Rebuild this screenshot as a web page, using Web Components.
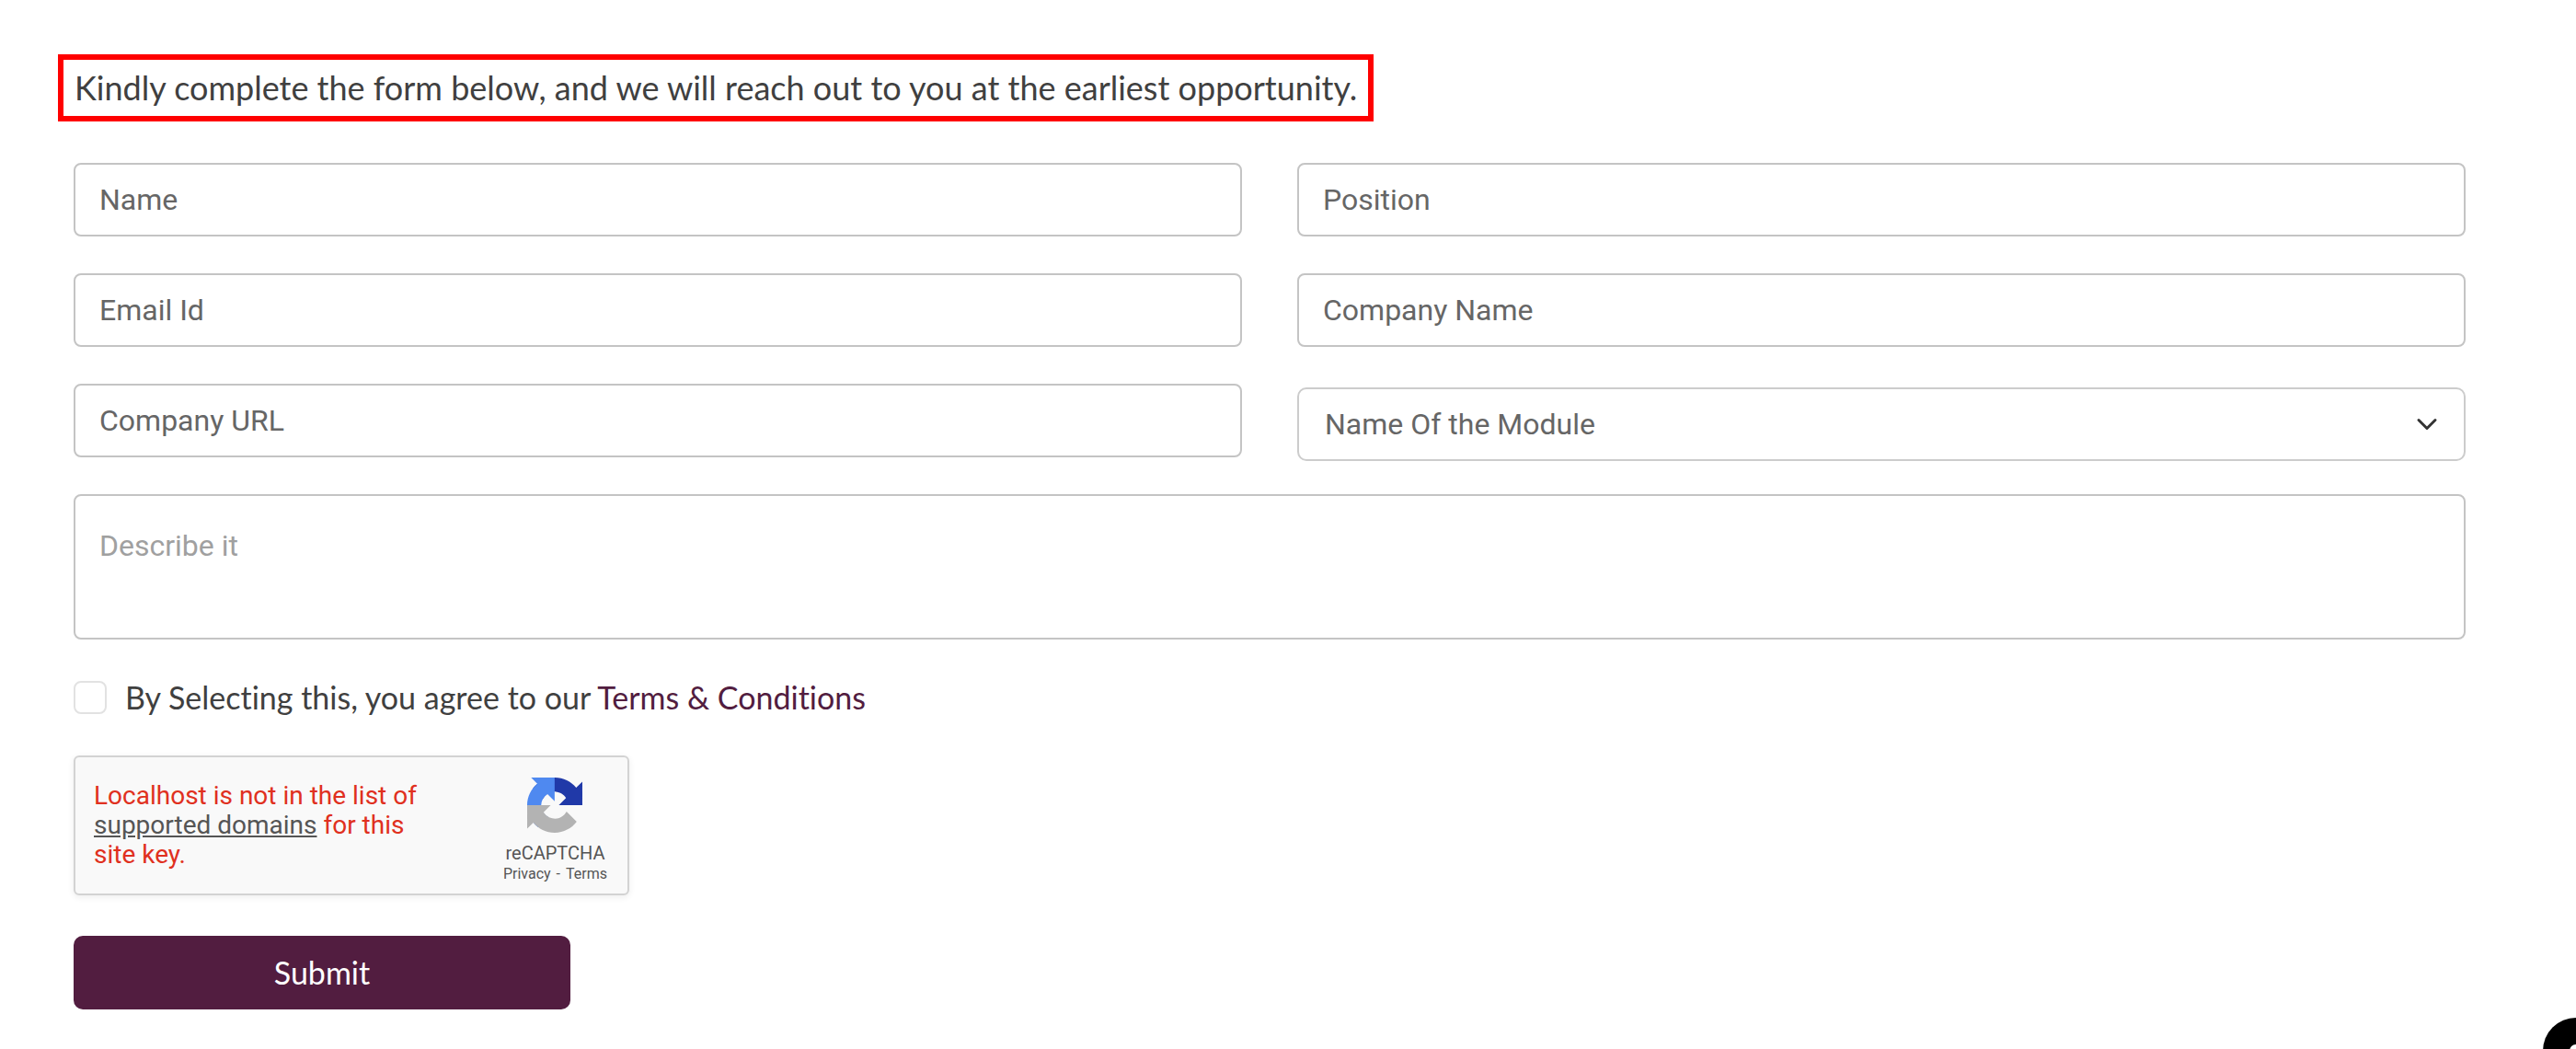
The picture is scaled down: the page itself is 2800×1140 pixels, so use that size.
<!DOCTYPE html>
<html lang="en">
<head>
<meta charset="utf-8">
<title>Contact form</title>
<style>
  body { margin: 0; background: #fff; color: #404040; font-family: Lato, "Liberation Sans", sans-serif; font-variant-ligatures: none; }
</style>
</head>
<body>
<contact-page></contact-page>

<template id="contact-page">
  <style>
    :host { display: block; padding: 59px 120px 43px 80px; }
    form { display: flex; flex-direction: column; align-items: stretch; }
    .fields { display: grid; grid-template-columns: 1fr 1fr; gap: 40px 60px; align-items: start; margin: 45px 0 36px; }
    module-select { padding-top: 4px; }
    terms-check { margin: 42px 0; }
    submit-button { margin-top: 44px; }
  </style>
  <form>
    <form-intro>Kindly complete the form below, and we will reach out to you at the earliest opportunity.</form-intro>
    <div class="fields">
      <text-field label="Name"></text-field>
      <text-field label="Position"></text-field>
      <text-field label="Email Id" type="email"></text-field>
      <text-field label="Company Name"></text-field>
      <text-field label="Company URL" type="url"></text-field>
      <module-select></module-select>
    </div>
    <message-field></message-field>
    <terms-check></terms-check>
    <captcha-box></captcha-box>
    <submit-button>Submit</submit-button>
  </form>
  <chat-bubble></chat-bubble>
</template>

<template id="form-intro">
  <style>
    :host { display: flex; margin-left: -17px; }
    p { margin: 0; padding: 8px 12px; border: 6px solid #f00; font-size: 36px; line-height: 45px; }
  </style>
  <p><slot></slot></p>
</template>

<template id="text-field">
  <style>
    :host { display: grid; font: 32px/40px Roboto, sans-serif; color: #666; }
    input, label { grid-area: 1 / 1; }
    input { box-sizing: border-box; width: 100%; height: 80px; margin: 0; padding: 0 26px; border: 2px solid #c4c4c4; border-radius: 8px; background: #fff; font: inherit; color: #404040; }
    label { align-self: center; justify-self: start; padding-left: 28px; pointer-events: none; }
    input:not(:placeholder-shown) + label { visibility: hidden; }
  </style>
  <input id="box" placeholder=" ">
  <label for="box"></label>
</template>

<template id="module-select">
  <style>
    :host { display: grid; font: 32px/40px Roboto, sans-serif; }
    select, svg { grid-area: 1 / 1; }
    select { appearance: none; box-sizing: border-box; width: 100%; height: 80px; margin: 0; padding: 0 80px 0 28px; border: 2px solid #ccc; border-radius: 10px; background: #fff; font: inherit; color: #666; }
    svg { align-self: center; justify-self: end; margin-right: 30px; width: 24px; height: 24px; pointer-events: none; }
  </style>
  <select aria-label="Name Of the Module"><option>Name Of the Module</option></select>
  <svg viewBox="0 0 24 24" fill="none" stroke="#343434" stroke-width="3" stroke-linecap="round" stroke-linejoin="round"><path d="M3 7.5 12 16.5 21 7.5"/></svg>
</template>

<template id="message-field">
  <style>
    :host { display: block; }
    textarea { display: block; box-sizing: border-box; width: 100%; height: 158px; padding: 34px 26px; border: 2px solid #c4c4c4; border-radius: 8px; background: #fff; font: 32px/40px Roboto, sans-serif; color: #404040; resize: none; }
    textarea::placeholder { color: #a0a0a0; opacity: 1; }
  </style>
  <textarea aria-label="Describe it" placeholder="Describe it"></textarea>
</template>

<template id="terms-check">
  <style>
    :host { display: flex; align-items: center; gap: 20px; font-size: 34px; line-height: 42px; }
    input { appearance: none; flex: none; box-sizing: border-box; width: 36px; height: 36px; margin: 0; border: 2px solid #e2e2e2; border-radius: 8px; background: #fff; }
    input:checked { background: #521d40; }
    a { color: #521d40; text-decoration: none; }
  </style>
  <input type="checkbox" id="agree">
  <label for="agree">By Selecting this, you agree to our <a href="#terms">Terms &amp; Conditions</a></label>
</template>

<template id="captcha-box">
  <style>
    :host { display: flex; align-self: flex-start; box-sizing: border-box; width: 604px; height: 152px; align-items: stretch; justify-content: space-between; padding: 0 22px 0 20px; border: 2px solid #d3d3d3; border-radius: 6px; background: #f9f9f9; box-shadow: 0 2px 6px 1px rgba(0,0,0,.06); font-family: Roboto, sans-serif; color: #555; }
    p { align-self: center; width: 370px; margin: 0; font-size: 28px; line-height: 32px; color: #e03020; }
    p a { color: #555; }
    .brand { display: flex; flex-direction: column; align-items: center; padding-top: 22px; }
    svg { width: 60px; height: 60px; }
    .name { margin-top: 10px; font-size: 20px; line-height: 24px; }
    .links { display: flex; gap: 6px; font-size: 16px; line-height: 22px; }
    .links a { color: inherit; text-decoration: none; }
  </style>
  <p>Localhost is not in the list of <a href="#domains">supported domains</a> for this site key.</p>
  <div class="brand">
    <svg viewBox="0 0 64 64" aria-hidden="true">
      <path fill="#2039a8" d="M64 31.955l-.033-1.37V4.687l-7.16 7.16C50.948 4.674 42.033.093 32.05.093c-10.4 0-19.622 4.96-25.458 12.64l11.736 11.86a15.55 15.55 0 0 1 4.754-5.334c2.05-1.6 4.952-2.906 8.968-2.906.485 0 .86.057 1.135.163 4.976.393 9.288 3.14 11.828 7.124l-8.307 8.307L64 31.953"/>
      <path fill="#4f89f0" d="M31.862.094l-1.37.033H4.594l7.16 7.16C4.58 13.147 0 22.06 0 32.046c0 10.4 4.96 19.622 12.64 25.458L24.5 45.768a15.55 15.55 0 0 1-5.334-4.754c-1.6-2.05-2.906-4.952-2.906-8.968 0-.485.057-.86.163-1.135.393-4.976 3.14-9.288 7.124-11.828l8.307 8.307L31.86.095"/>
      <path fill="#b3b3b3" d="M.001 32.045l.033 1.37v25.898l7.16-7.16c5.86 7.173 14.774 11.754 24.76 11.754 10.4 0 19.622-4.96 25.458-12.64l-11.736-11.86a15.55 15.55 0 0 1-4.754 5.334c-2.05 1.6-4.952 2.906-8.968 2.906-.485 0-.86-.057-1.135-.163-4.976-.393-9.288-3.14-11.828-7.124l8.307-8.307c-10.522.04-22.4.066-27.295-.005"/>
    </svg>
    <div class="name">reCAPTCHA</div>
    <div class="links"><a href="#privacy">Privacy</a><span>-</span><a href="#terms">Terms</a></div>
  </div>
</template>

<template id="submit-button">
  <style>
    :host { display: flex; }
    button { width: 540px; height: 80px; padding: 0; border: 0; border-radius: 10px; background: #521d40; color: #fff; font: 34px/42px Lato, sans-serif; cursor: pointer; }
  </style>
  <button type="submit"><slot></slot></button>
</template>

<template id="chat-bubble">
  <style>
    :host { position: fixed; right: -36px; bottom: -38px; width: 72px; height: 72px; }
    button { display: block; width: 100%; height: 100%; padding: 0; border: 0; border-radius: 50%; background: #000; }
    svg { display: block; width: 100%; height: 100%; }
  </style>
  <button type="button" aria-label="Open chat"><svg viewBox="0 0 72 72"><circle cx="36" cy="36" r="7" fill="#fff"/></svg></button>
</template>

<script>
  const define = (name, setup) => customElements.define(name, class extends HTMLElement {
    constructor() {
      super();
      this.attachShadow({ mode: 'open' }).append(document.getElementById(name).content.cloneNode(true));
    }
    connectedCallback() { if (setup) setup(this, this.shadowRoot); }
  });

  define('form-intro');
  define('text-field', (host, root) => {
    root.querySelector('label').textContent = host.getAttribute('label');
    root.querySelector('input').type = host.getAttribute('type') || 'text';
  });
  define('module-select');
  define('message-field');
  define('terms-check');
  define('captcha-box');
  define('submit-button');
  define('chat-bubble');
  define('contact-page');
</script>
</body>
</html>
